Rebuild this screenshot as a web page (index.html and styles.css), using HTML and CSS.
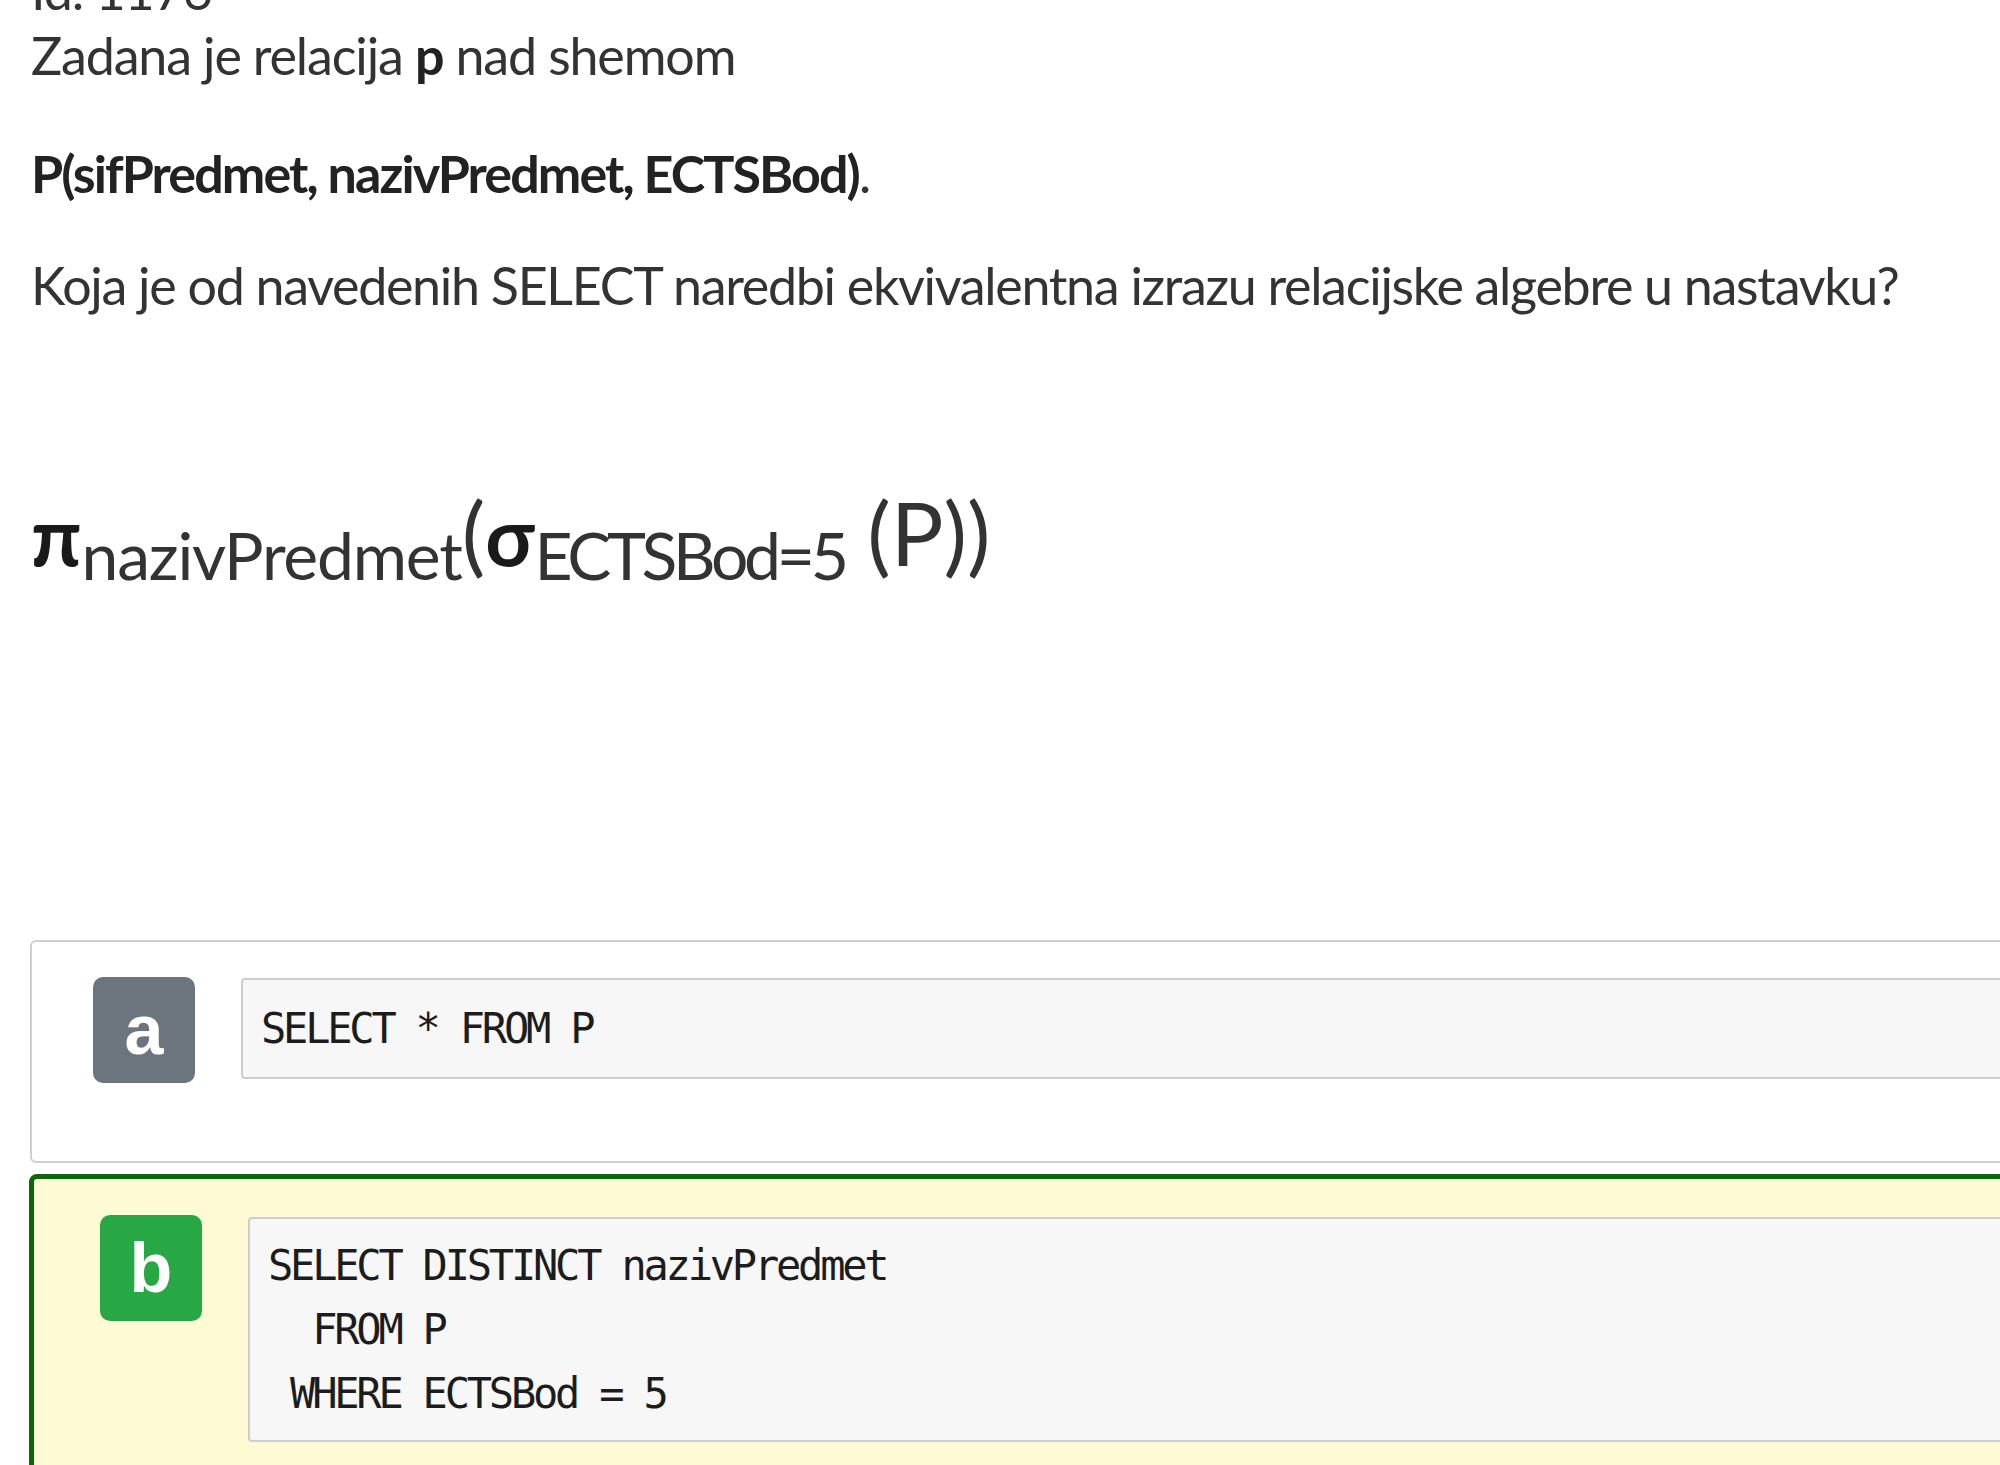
FILE: index.html
```html
<!DOCTYPE html>
<html lang="hr">
<head>
<meta charset="utf-8">
<title>Pitanje</title>
<link rel="stylesheet" href="styles.css">
</head>
<body>
<div class="page">
  <div class="question">
    <div class="qid">Id: 1176</div>
    <p class="lead">Zadana je relacija <b>p</b> nad shemom</p>
    <p class="schema"><b>P(sifPredmet, nazivPredmet, ECTSBod)</b>.</p>
    <p class="ask">Koja je od navedenih SELECT naredbi ekvivalentna izrazu relacijske algebre u nastavku?</p>
    <div class="formula"><b class="op">π</b><sub class="proj">nazivPredmet</sub>(<b class="op">σ</b><sub class="cond">ECTSBod=5</sub> (P))</div>
  </div>
  <div class="answers">
    <div class="answer">
      <span class="badge">a</span>
      <pre class="code">SELECT * FROM P</pre>
    </div>
    <div class="answer correct">
      <span class="badge">b</span>
      <pre class="code">SELECT DISTINCT nazivPredmet
  FROM P
 WHERE ECTSBod = 5</pre>
    </div>
  </div>
</div>
</body>
</html>
```

FILE: styles.css
```css
html, body {
  margin: 0;
  padding: 0;
  overflow: hidden;
  background: #ffffff;
}

.page {
  padding-left: 30px;
  font-family: Lato, "Noto Sans", sans-serif;
  color: #333333;
}

.question {
  margin-top: -42px;
  padding-left: 1px;
}

.qid,
.question p {
  font-size: 52px;
  line-height: 65px;
  letter-spacing: -1.15px;
  white-space: nowrap;
}

.question p {
  margin: 0;
}

.lead {
  margin-bottom: 53px !important;
}

.schema {
  margin-bottom: 47px !important;
}

.question .ask {
  letter-spacing: -1.3px;
}

.lead b {
  font-weight: 700;
  color: #222222;
}

.schema b {
  font-weight: 700;
  color: #222222;
  letter-spacing: -1.9px;
}

.formula {
  margin-top: 164px;
  height: 100px;
  font-size: 88px;
  line-height: 100px;
  white-space: nowrap;
  color: #333333;
}

.formula .op {
  font-size: 80px;
  font-weight: 700;
  color: #1a1a1a;
}

.formula sub {
  font-size: 66px;
  line-height: 0;
  vertical-align: -14px;
}

.formula .proj {
  letter-spacing: -1.2px;
}

.formula .cond {
  letter-spacing: -4.3px;
}

.answers {
  margin-top: 358px;
  width: 2100px;
}

.answer {
  display: flex;
  align-items: flex-start;
  gap: 46px;
  border: 2px solid #cfcfcf;
  border-radius: 6px;
  background: #ffffff;
  padding: 35px 0 78px 61px;
}

.answer + .answer {
  margin-top: 11px;
  margin-left: -1px;
}

.answer.correct {
  border: 5px solid #0b670b;
  border-radius: 8px;
  background: #fefad4;
  padding: 36px 0 40px 66px;
}

.badge {
  flex: none;
  width: 102px;
  height: 106px;
  border-radius: 10px;
  background: #6c757d;
  color: #ffffff;
  font-family: "Liberation Sans", Arial, sans-serif;
  font-weight: 700;
  font-size: 70px;
  line-height: 106px;
  text-align: center;
}

.correct .badge {
  background: #28a745;
}

.code {
  flex: 1;
  margin: 1px 0 0;
  border: 2px solid #cdcdcd;
  border-radius: 4px;
  background: #f7f7f7;
  padding: 17px 18px 16px;
  font-family: "DejaVu Sans Mono", "Liberation Mono", monospace;
  font-size: 42px;
  letter-spacing: -3.2px;
  line-height: 64px;
  color: #1c1c1c;
  white-space: pre;
}

.correct .code {
  margin-top: 2px;
  padding-top: 15px;
  padding-bottom: 14px;
}
```
